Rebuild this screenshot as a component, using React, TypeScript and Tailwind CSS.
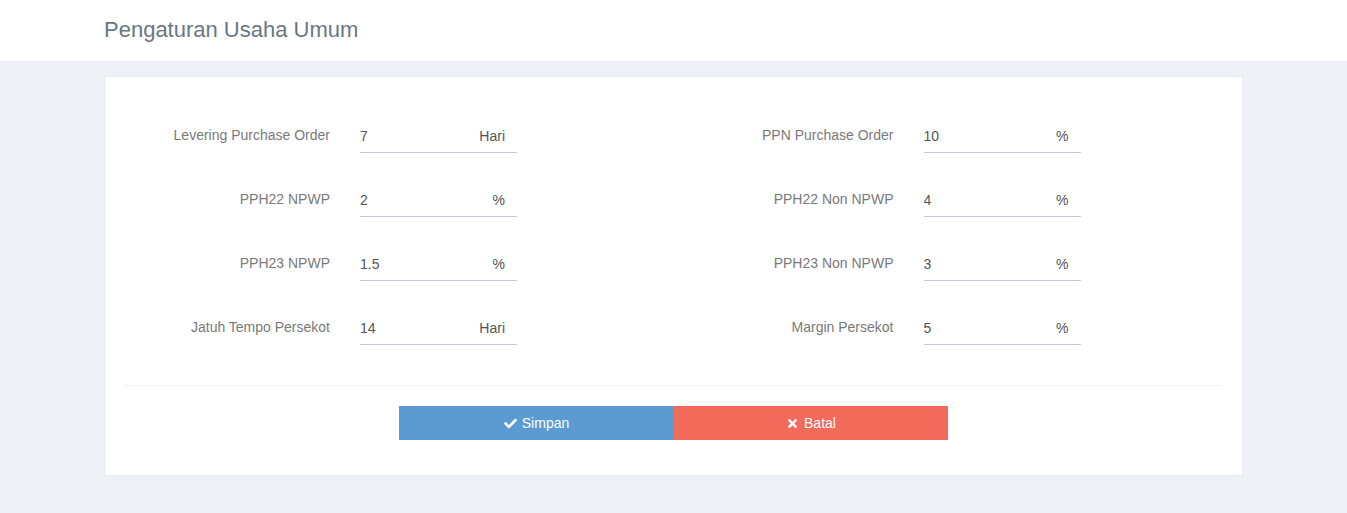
import { FaCheck, FaTimes } from "react-icons/fa"

const leftFields = [
  { label: "Levering Purchase Order", value: "7", unit: "Hari" },
  { label: "PPH22 NPWP", value: "2", unit: "%" },
  { label: "PPH23 NPWP", value: "1.5", unit: "%" },
  { label: "Jatuh Tempo Persekot", value: "14", unit: "Hari" },
]

const rightFields = [
  { label: "PPN Purchase Order", value: "10", unit: "%" },
  { label: "PPH22 Non NPWP", value: "4", unit: "%" },
  { label: "PPH23 Non NPWP", value: "3", unit: "%" },
  { label: "Margin Persekot", value: "5", unit: "%" },
]

type Field = { label: string; value: string; unit: string }

function FieldRow({ field }: { field: Field }) {
  return (
    <div className="flex items-start h-[34px]">
      {/* Label */}
      <label className="w-[220px] shrink-0 pt-[6px] text-right text-[14px] leading-[20px] text-[#7a7a7a]">
        {field.label}
      </label>

      {/* Input with unit */}
      <div className="ml-[30px] flex h-[34px] w-[157px] items-center border-b border-[#c2cad8] pt-[2px]">
        <input
          defaultValue={field.value}
          className="w-full min-w-0 flex-1 bg-transparent text-[14px] text-[#555] outline-none"
        />
        <span className="pr-[12px] text-[14px] text-[#555]">{field.unit}</span>
      </div>
    </div>
  )
}

export default function App() {
  return (
    <div className="min-h-[513px] bg-[#eef1f5] font-['Liberation_Sans',Arial,sans-serif]">
      {/* Page header */}
      <div className="h-[61px] bg-white pl-[104px] pt-[17px]">
        <h1 className="text-[22px] leading-[26px] text-[#697882]">Pengaturan Usaha Umum</h1>
      </div>

      <div className="px-[104px] pt-[15px]">
        <div className="w-[1139px] border border-[#e7ecf1] bg-white px-[20px] pb-[35px] pt-[42px]">
          {/* Form grid */}
          <div className="-mx-[15px] grid grid-cols-2">
            <div className="flex flex-col gap-[30px]">
              {leftFields.map((f) => (
                <FieldRow key={f.label} field={f} />
              ))}
            </div>
            <div className="flex flex-col gap-[30px]">
              {rightFields.map((f) => (
                <FieldRow key={f.label} field={f} />
              ))}
            </div>
          </div>

          <div className="mt-[40px] border-t border-[#eef1f5]" />

          {/* Actions */}
          <div className="mt-[20px] flex justify-center">
            <button className="flex h-[34px] w-[275px] items-center justify-center gap-[5px] bg-[#5b9bd1] text-[14px] text-white">
              <FaCheck className="h-[13px] w-[13px]" />
              Simpan
            </button>
            <button className="flex h-[34px] w-[274px] items-center justify-center gap-[5px] bg-[#f36a5a] text-[14px] text-white">
              <FaTimes className="h-[13px] w-[13px]" />
              Batal
            </button>
          </div>
        </div>
      </div>
    </div>
  )
}
